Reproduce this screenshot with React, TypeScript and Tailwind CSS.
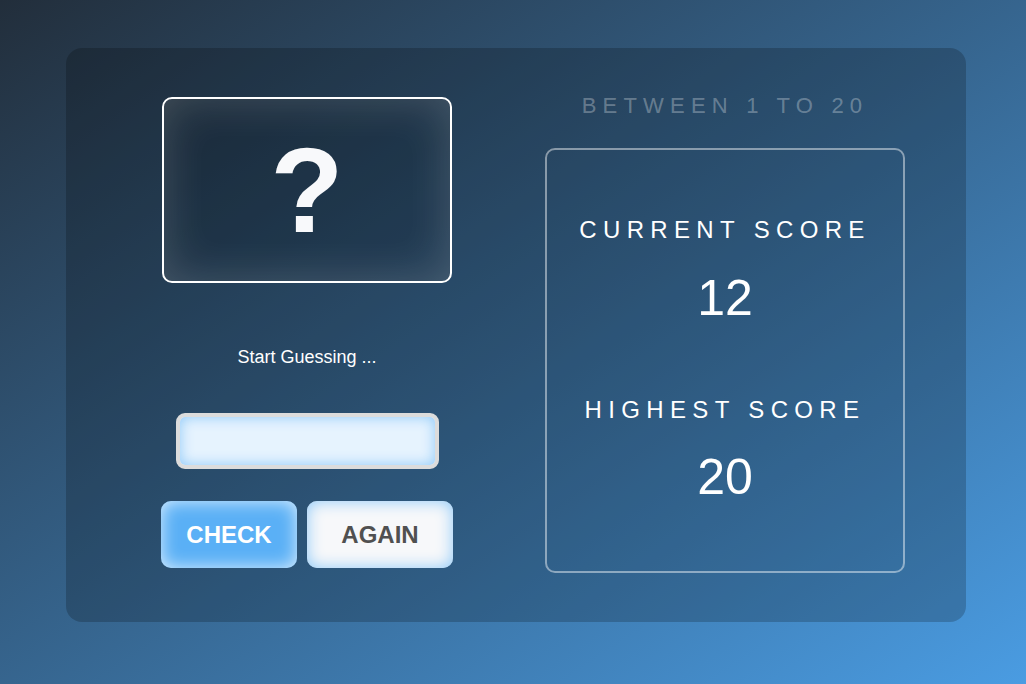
import React, {useState} from 'react';

export default function App() {
    const [guess, setGuess] = useState('');
    const score = 12;
    const highscore = 20;

    return (
        <div
            className="w-[1026px] h-[684px] overflow-hidden bg-[linear-gradient(to_bottom_right,#222e3b,#4a9ce2)] pt-[48px] pl-[66px] font-['Liberation_Sans',Arial,sans-serif]">
            <div className="w-[900px] h-[574px] rounded-2xl bg-black/20 flex pl-[95px] pt-[46px]">

                <div className="w-[292px] flex flex-col items-center pt-[3px]">
                    <div
                        className="w-[290px] h-[186px] border-2 border-white rounded-[10px] bg-black/15 shadow-[inset_0_0_45px_rgba(255,255,255,0.18)] flex items-center justify-center">
                        <span className="text-[120px] leading-none font-bold text-[#f8f9fb]">?</span>
                    </div>
                    <p className="mt-[65px] text-[18px] leading-none text-white">Start Guessing ...</p>
                    <input
                        value={guess}
                        onChange={e => setGuess(e.target.value)}
                        className="mt-[47px] w-[263px] h-[56px] border-[4px] border-[#dcdcdc] rounded-[9px] bg-[#e6f3fe] shadow-[inset_0_0_14px_#90caf9] outline-none text-center text-2xl"/>
                    <div className="mt-[32px] flex gap-[10px]">
                        <button
                            className="w-[136px] h-[67px] rounded-[10px] bg-[#5ab0f6] shadow-[inset_0_0_18px_rgba(255,255,255,0.8)] text-white text-[24px] font-bold">
                            CHECK
                        </button>
                        <button
                            className="w-[146px] h-[67px] rounded-[10px] bg-[#f7f8fa] shadow-[inset_0_0_16px_#8cc8f8] text-[#505050] text-[24px] font-bold">
                            AGAIN
                        </button>
                    </div>
                </div>

                <div className="ml-[92px] w-[360px] flex flex-col items-center pt-[1px]">
                    <p className="text-[22px] leading-none tracking-[6.2px] text-white/30">BETWEEN 1 TO 20</p>
                    <div
                        className="mt-[31px] w-[360px] h-[425px] border-2 border-white/45 rounded-[10px] flex flex-col items-center pt-[68px] text-white">
                        <p className="text-[24px] leading-none tracking-[6.35px]">CURRENT SCORE</p>
                        <p className="mt-[31px] text-[50px] leading-none">{score}</p>
                        <p className="mt-[75px] text-[24px] leading-none tracking-[6.35px]">HIGHEST SCORE</p>
                        <p className="mt-[30px] text-[50px] leading-none">{highscore}</p>
                    </div>
                </div>
            </div>
        </div>
    )
}
